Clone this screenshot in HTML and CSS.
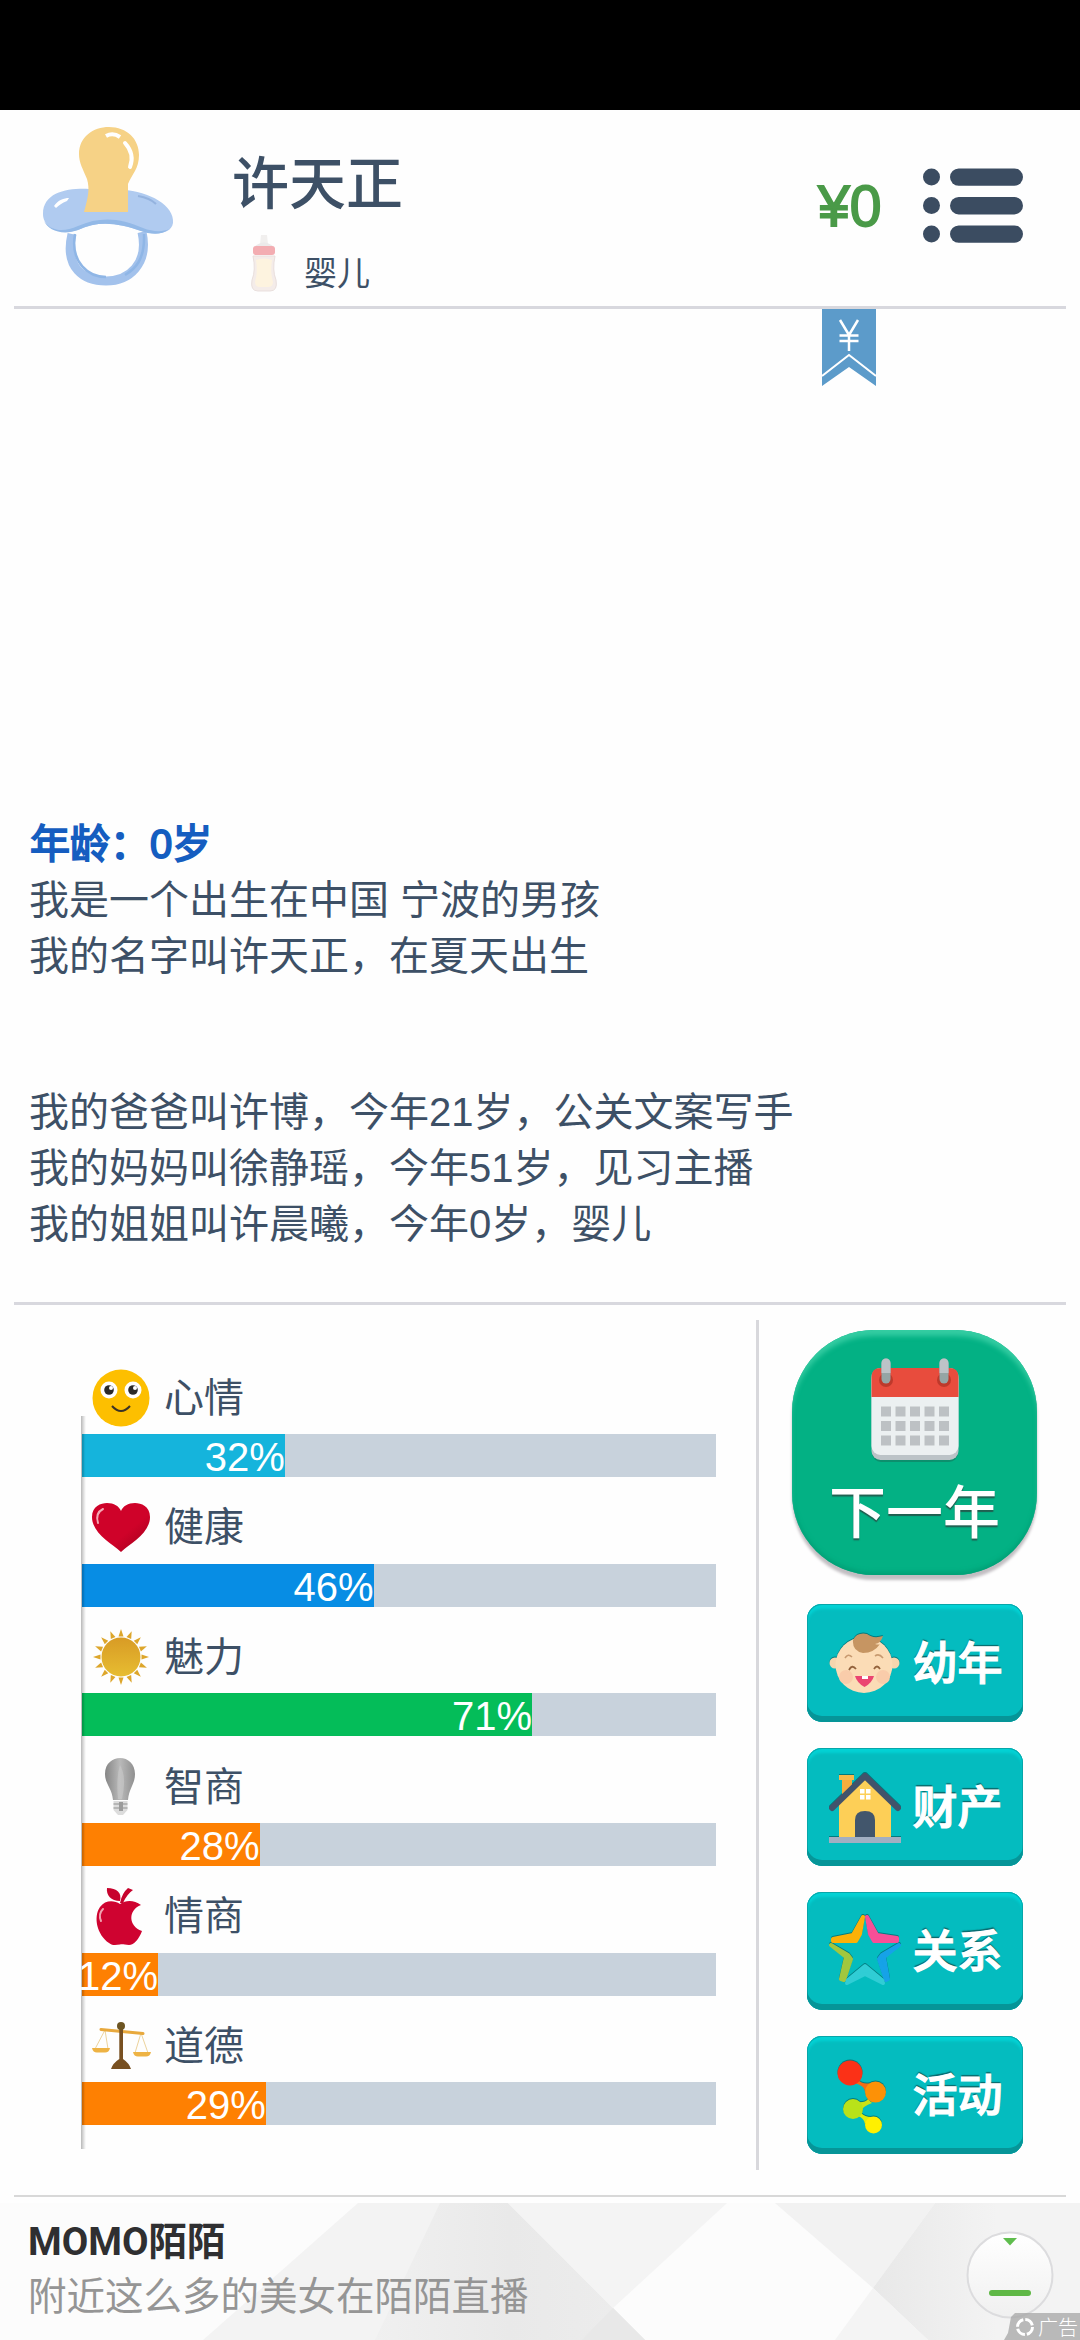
FILE: index.html
```html
<!DOCTYPE html>
<html lang="zh-CN">
<head>
<meta charset="utf-8">
<title>许天正</title>
<link rel="stylesheet" href="styles.css">
</head>
<body>
<div class="status-bar"></div>

<header class="header">
  <svg class="avatar" viewBox="0 0 136 164">
    <path d="M33 110 C25 144 45 157 67 157 C90 157 110 140 103 108" fill="none" stroke="#a3c2ec" stroke-width="9"/>
    <path d="M36 110 C31 139 50 153 67 153" fill="none" stroke="#8fb6e6" stroke-width="2.5"/>
    <path d="M105 110 C106 136 96 145 86 151" fill="none" stroke="#8fb6e6" stroke-width="2.5"/>
    <path d="M4 90 C4 68 29 64 50 65 L84 66 C110 67 136 82 134 99 C132 111 115 111 102 107 C80 99 59 96 39 106 C19 112 4 103 4 90 Z" fill="#b0cbf0"/>
    <path d="M5 97 C13 108 25 108 39 102 C61 92 82 94 104 104 C114 108 124 108 130 105 C122 112 110 110 102 107 C80 99 59 96 39 106 C23 112 9 106 5 97 Z" fill="#93b9e7"/>
    <path d="M15 82 C19 76 25 74 30 74 L28 77 C23 79 20 81 17 84 Z" fill="#fff"/>
    <path d="M99 72 Q111 74 117 80" fill="none" stroke="#94b3df" stroke-width="2"/>
    <path d="M45 88 C49 74 51 65 48 55 C44 45 40 39 40 30 C40 13 54 3 70 3 C88 3 100 15 100 31 C100 45 93 50 89 60 L89 88 Z" fill="#f6d286"/>
    <path d="M67 12 Q74 8 81 13" fill="none" stroke="#fff" stroke-width="4"/>
    <path d="M86 19 Q96 30 91 43" fill="none" stroke="#fff" stroke-width="4" stroke-linecap="round"/>
  </svg>
  <div class="identity">
    <h1 class="name">许天正</h1>
    <div class="stage">
      <svg class="bottle" viewBox="0 0 30 60">
        <path d="M11 11 L12 2 H18 L19 11 Z" fill="#f1efee"/>
        <path d="M5 14 Q15 5 25 14 Z" fill="#eceaea"/>
        <rect x="4" y="13" width="22" height="9" rx="3" fill="#f3adb2"/>
        <path d="M4 23 H26 Q23 37 27 47 Q29 58 21 58 H9 Q1 58 3 47 Q7 37 4 23 Z" fill="#f4ece9" stroke="#e9dfdd"/>
        <path d="M7 27 Q15 24 23 27 Q21 39 24 49 Q24 54 19 54 H11 Q6 54 6 49 Q9 39 7 27 Z" fill="#fdf3df"/>
      </svg>
      <span>婴儿</span>
    </div>
  </div>
  <div class="money">¥0</div>
  <svg class="menu" viewBox="0 0 100 76" fill="#3b4c61">
    <circle cx="8.5" cy="9" r="8.5"/><rect x="27" y="0.4" width="73" height="17.4" rx="8.7"/>
    <circle cx="8.5" cy="37.6" r="8.5"/><rect x="27" y="29" width="73" height="17.4" rx="8.7"/>
    <circle cx="8.5" cy="66" r="8.5"/><rect x="27" y="57.4" width="73" height="17.4" rx="8.7"/>
  </svg>
</header>

<section class="story">
  <svg class="ribbon" viewBox="0 0 54 77">
    <path d="M0 0 H54 V77 L27 58 L0 77 Z" fill="#5c9bca"/>
    <path d="M0 67 L27 46 L54 67" fill="none" stroke="#fff" stroke-width="2"/>
    <path d="M18 11 L27 26 L36 11 M27 25 V42 M17.500 26.500 H36.500 M17.500 32 H36.500" fill="none" stroke="#fff" stroke-width="2.500"/>
  </svg>
  <h2 class="age">年龄：0岁</h2>
  <p>我是一个出生在中国 宁波的男孩</p>
  <p>我的名字叫许天正，在夏天出生</p>
  <p class="family">我的爸爸叫许博，今年21岁，公关文案写手</p>
  <p>我的妈妈叫徐静瑶，今年51岁，见习主播</p>
  <p>我的姐姐叫许晨曦，今年0岁，婴儿</p>
</section>

<main class="panel">
  <section class="stats">
    <div class="stat">
      <div class="label">
        <svg viewBox="0 0 60 60">
          <circle cx="30" cy="30" r="28.500" fill="#fdbf00"/>
          <circle cx="18" cy="22" r="8.500" fill="#fff"/><circle cx="42" cy="22" r="8.500" fill="#fff"/>
          <circle cx="18" cy="22" r="4.800" fill="#2b2a29"/><circle cx="42" cy="22" r="4.800" fill="#2b2a29"/>
          <circle cx="20" cy="20" r="2" fill="#fff"/><circle cx="44" cy="20" r="2" fill="#fff"/>
          <path d="M21 38 Q30 48 39 38" fill="none" stroke="#3b3326" stroke-width="2"/>
        </svg>
        <span>心情</span>
      </div>
      <div class="bar"><div class="fill cyan" style="width:32%">32%</div></div>
    </div>
    <div class="stat">
      <div class="label">
        <svg viewBox="0 0 60 60">
          <defs><linearGradient id="heart" x2="1" y2="1"><stop offset=".6" stop-color="#cf0229"/><stop offset="1" stop-color="#9d001c"/></linearGradient></defs>
          <path d="M30 54 C20 45 1 35 1 19 C1 8 10 5 16 5 C23 5 28 8 30 13 C32 8 37 5 44 5 C50 5 59 8 59 19 C59 35 40 45 30 54 Z" fill="url(#heart)"/>
          <path d="M7 25 Q4 15 12 11" fill="none" stroke="#f4a9b5" stroke-width="2" stroke-linecap="round"/>
        </svg>
        <span>健康</span>
      </div>
      <div class="bar"><div class="fill blue" style="width:46%">46%</div></div>
    </div>
    <div class="stat">
      <div class="label">
        <svg viewBox="0 0 60 60">
          <defs><linearGradient id="sun" x2="0" y2="1"><stop stop-color="#d89b25"/><stop offset="1" stop-color="#e7bd31"/></linearGradient>
          <path id="ray" d="M30 2 L32.500 9.500 H27.500 Z" fill="#dda62b"/></defs>
          <circle cx="30" cy="30" r="19.500" fill="url(#sun)"/>
          <use href="#ray"/><use href="#ray" transform="rotate(22.5 30 30)"/><use href="#ray" transform="rotate(45 30 30)"/><use href="#ray" transform="rotate(67.5 30 30)"/>
          <use href="#ray" transform="rotate(90 30 30)"/><use href="#ray" transform="rotate(112.5 30 30)"/><use href="#ray" transform="rotate(135 30 30)"/><use href="#ray" transform="rotate(157.5 30 30)"/>
          <use href="#ray" transform="rotate(180 30 30)"/><use href="#ray" transform="rotate(202.5 30 30)"/><use href="#ray" transform="rotate(225 30 30)"/><use href="#ray" transform="rotate(247.5 30 30)"/>
          <use href="#ray" transform="rotate(270 30 30)"/><use href="#ray" transform="rotate(292.5 30 30)"/><use href="#ray" transform="rotate(315 30 30)"/><use href="#ray" transform="rotate(337.5 30 30)"/>
        </svg>
        <span>魅力</span>
      </div>
      <div class="bar"><div class="fill green" style="width:71%">71%</div></div>
    </div>
    <div class="stat">
      <div class="label">
        <svg viewBox="0 0 60 60">
          <defs><linearGradient id="bulb"><stop stop-color="#858585"/><stop offset=".5" stop-color="#b9b9b9"/><stop offset="1" stop-color="#8f8f8f"/></linearGradient></defs>
          <path d="M14 17 C14 6 22 1 29 1 C37 1 44 7 44 17 C44 27 38 31 37 43 H22 C21 31 14 27 14 17 Z" fill="url(#bulb)"/>
          <path d="M29 8 Q36 20 31 42 H27 Q25 20 29 8" fill="#c9c9c9" opacity=".6"/>
          <path d="M22.500 44 H36.500 V53 L32 58 H27 L22.500 53 Z" fill="#dcdcdc"/>
          <path d="M22.500 47 H36.500 M22.500 51 H36.500" stroke="#a9a9a9" stroke-width="1.500"/>
          <path d="M28 45 H32 V54 H28 Z" fill="#9b9b9b"/>
        </svg>
        <span>智商</span>
      </div>
      <div class="bar"><div class="fill orange" style="width:28%">28%</div></div>
    </div>
    <div class="stat">
      <div class="label">
        <svg viewBox="0 0 60 60">
          <path d="M29 17 C35 13 43 13 50 18 C37 23 37 39 51 44 C48 52 43 58 38 58 C34 58 32 57 29 57.500 C25 58 22 59 18 56 C6 48 2 30 9 20 C14 13 23 13 29 17 Z" fill="#cf0330"/>
          <path d="M29 14 C20 14 15 8 16 1 C26 1 31 6 29 14 Z" fill="#c7032d"/>
          <path d="M29 16 Q31 6 37 1 L42 3 Q36 7 32 16 Z" fill="#c7032d"/>
          <path d="M10 34 Q7 27 12 22" fill="none" stroke="#f0a2b0" stroke-width="2" stroke-linecap="round"/>
        </svg>
        <span>情商</span>
      </div>
      <div class="bar"><div class="fill orange" style="width:12%">12%</div></div>
    </div>
    <div class="stat">
      <div class="label">
        <svg viewBox="0 0 60 60">
          <path d="M14 14 L4 33 M14 14 L17 33 M50 17 L44 37 M50 17 L57 37" stroke="#ecd39c" stroke-width="1"/>
          <path d="M10 13.500 L52 17.500" stroke="#e8a93d" stroke-width="3" stroke-linecap="round"/>
          <path d="M1 32 H19 Q18 36.500 14 36.500 H6 Q2 36.500 1 32 Z M42 36 H60 Q59 40.500 55 40.500 H47 Q43 40.500 42 36 Z" fill="#eeb344"/>
          <path d="M28.300 12 H32 V43 Q38 47 40 53 H20 Q22 47 28.300 43 Z" fill="#785021"/>
          <circle cx="30" cy="10" r="4" fill="#6d5522"/>
        </svg>
        <span>道德</span>
      </div>
      <div class="bar"><div class="fill orange" style="width:29%">29%</div></div>
    </div>
  </section>

  <nav class="actions">
    <button class="next">
      <svg viewBox="0 0 88 104">
        <rect x="1" y="16" width="86" height="88" rx="9" fill="#16735b" opacity=".55"/>
        <rect x="0.500" y="13" width="87" height="89" rx="9" fill="#bcc3c7"/>
        <rect x="0.500" y="10" width="87" height="87" rx="9" fill="#ecf0f1"/>
        <path d="M0.500 39 V19 Q0.500 10 9.500 10 H78.500 Q87.500 10 87.500 19 V39 Z" fill="#e84c3d"/>
        <circle cx="15" cy="22" r="7" fill="#be392b"/><circle cx="73" cy="22" r="7" fill="#be392b"/>
        <rect x="10.500" y="0.500" width="9" height="25" rx="4.500" fill="#95a5a5"/><rect x="68.500" y="0.500" width="9" height="25" rx="4.500" fill="#95a5a5"/>
        <path d="M10.500 15 V5 A4.500 4.500 0 0 1 19.500 5 V15 Z M68.500 15 V5 A4.500 4.500 0 0 1 77.500 5 V15 Z" fill="#bdc3c7"/>
        <path d="M10 53.500 H78 M10 68 H78 M10 82.500 H78" stroke="#bdc1c4" stroke-width="10" stroke-dasharray="10 4.500"/>
      </svg>
      <span>下一年</span>
    </button>
    <button class="action">
      <svg viewBox="0 0 72 74">
        <circle cx="6" cy="37" r="5.500" fill="#f6d6ae"/><circle cx="65" cy="37" r="5.500" fill="#f6d6ae"/>
        <ellipse cx="35" cy="39" rx="28.500" ry="28" fill="#fbdcb6"/>
        <circle cx="17" cy="51" r="7" fill="#f9ccaa"/><circle cx="54" cy="51" r="7" fill="#f9ccaa"/>
        <path d="M24 14 Q28 6 38 8 Q44 13 54 10 Q52 17 46 18 Q50 19 51 18 Q45 27 34 27 Q23 25 24 14 Z" fill="#c69562"/>
        <path d="M16 32 Q19 27 23 31 M46 30 Q50 27 54 32" fill="none" stroke="#c89a70" stroke-width="1.600"/>
        <path d="M20 44 Q23 38 27 43 M45 43 Q48 38 51 43" fill="none" stroke="#93633d" stroke-width="1.800"/>
        <path d="M26 50 H45 Q43 57 35.500 61 Q28 57 26 50 Z" fill="#eb4471"/><path d="M33 50 h6 v3 h-6z" fill="#fff"/>
      </svg>
      <span>幼年</span>
    </button>
    <button class="action">
      <svg viewBox="0 0 72 74">
        <path d="M13 10 H23 V26 L13 34 Z" fill="#f5ad3d"/><rect x="10" y="5" width="15" height="5" fill="#f8b94a"/>
        <path d="M10 68 V34 L36 8 L62 34 V68 Z" fill="#fdcf57"/>
        <path d="M3 38 L36 6 L69 38" fill="none" stroke="#42536b" stroke-width="6" stroke-linecap="round" stroke-linejoin="round"/>
        <path d="M26 68 V50 Q26 41 36 41 Q46 41 46 50 V68 Z" fill="#42566c"/>
        <path d="M31 19 h4.500 v4.500 h-4.500z M37 19 h4.500 v4.500 h-4.500z M31 25 h4.500 v4.500 h-4.500z M37 25 h4.500 v4.500 h-4.500z" fill="#fff"/>
        <rect x="0" y="67" width="72" height="6" fill="#a2afc2"/>
      </svg>
      <span>财产</span>
    </button>
    <button class="action">
      <svg class="star" viewBox="0 0 72 74" stroke-linejoin="round" stroke-width="4">
        <path d="M34 6 L24 24 L4 28 L4 30 L27 30 L31 23 Z" fill="#fcb108" stroke="#fcb108"/>
        <path d="M38 6 L48 24 L68 27 L68 30 L45 30 L41 23 Z" fill="#f74f97" stroke="#f74f97"/>
        <path d="M2 34 L17 46 L12 68 L15 69 L22 48 L19 44 Z" fill="#a1c73e" stroke="#a1c73e"/>
        <path d="M70 34 L55 46 L59 68 L57 69 L50 48 L53 44 Z" fill="#16a2e8" stroke="#16a2e8"/>
        <path d="M36 55 L53 69 L54 72 L36 63 L18 72 L19 69 Z" fill="#30cdd5" stroke="#30cdd5"/>
      </svg>
      <span>关系</span>
    </button>
    <button class="action">
      <svg class="dots" viewBox="0 0 72 74">
        <path d="M28 21 Q34 27 41 25 L36 34 Q36 28 26 25 Z" fill="#f36b17"/>
        <path d="M39 41 Q36 45 28 44 L31 54 Q34 48 43 45 Z" fill="#cbe216"/>
        <path d="M29 58 Q35 60 36 66 L42 59 Q36 59 32 55 Z" fill="#dced0d"/>
        <circle cx="21" cy="15" r="12.500" fill="#fb3117"/><circle cx="46.500" cy="34" r="10.500" fill="#fd9106"/>
        <circle cx="24" cy="51" r="10" fill="#b9e219"/><circle cx="44.500" cy="67" r="8.500" fill="#fff000"/>
      </svg>
      <span>活动</span>
    </button>
  </nav>
</main>

<footer class="ad">
  <svg class="facets" viewBox="0 0 1080 137" preserveAspectRatio="none">
    <defs>
      <linearGradient id="f1"><stop stop-color="#f0f0f0"/><stop offset=".5" stop-color="#e9e9e9"/><stop offset="1" stop-color="#ededed"/></linearGradient>
      <linearGradient id="f2"><stop stop-color="#e8e8e8"/><stop offset=".6" stop-color="#f3f3f3"/></linearGradient>
    </defs>
    <rect width="1080" height="137" fill="#fcfcfc"/>
    <path d="M358 0 H508 L645 137 H203 Z" fill="#f3f3f3"/>
    <path d="M440 0 H508 L645 137 H375 Z" fill="url(#f1)"/>
    <path d="M508 0 H727 L613 105 Z" fill="#f4f4f4"/>
    <path d="M613 105 L645 137 H582 Z" fill="#e8e8e8"/>
    <path d="M775 0 H935 L873 85 Z" fill="#f2f2f2"/>
    <path d="M935 0 H1080 V137 H928 L873 85 Z" fill="url(#f2)"/>
    <path d="M873 85 L835 137 H928 Z" fill="#f4f4f4"/>
  </svg>
  <div class="ad-copy">
    <strong>MOMO陌陌</strong>
    <span>附近这么多的美女在陌陌直播</span>
  </div>
  <svg class="download" viewBox="0 0 88 88">
    <defs><linearGradient id="dl" x2="0" y2="1"><stop stop-color="#fff"/><stop offset="1" stop-color="#f0f0f0"/></linearGradient></defs>
    <circle cx="44" cy="44" r="42.500" fill="url(#dl)" stroke="#dcdcde" stroke-width="2"/>
    <path d="M37 7 H51 L44 14.500 Z" fill="#5fbd4d"/><rect x="23" y="59" width="42" height="6" rx="3" fill="#5fb846"/>
  </svg>
  <div class="ad-badge">
    <svg viewBox="0 0 20 20"><circle cx="10" cy="10" r="7.500" fill="none" stroke="#fff" stroke-width="3" stroke-dasharray="9.800 2"/></svg>
    <span>广告</span>
  </div>
</footer>
</body>
</html>
```
FILE: styles.css
```css
* { box-sizing: border-box; }

body {
  margin: 0;
  width: 1080px;
  height: 2340px;
  display: flex;
  flex-direction: column;
  background: #fefefe;
  color: #3d5066;
  font-family: "Liberation Sans", "Noto Sans CJK SC", sans-serif;
  overflow: hidden;
}

h1, h2, p { margin: 0; }

.status-bar { height: 110px; background: #000; }

.header {
  height: 199px;
  margin: 0 14px;
  border-bottom: 3px solid #d8d8de;
  display: flex;
}

.avatar { width: 136px; height: 164px; margin: 14px 0 0 25px; }

.identity { margin-left: 57px; padding-top: 29px; width: 400px; }

.name {
  font: 500 57px/80px "Noto Sans CJK SC", sans-serif;
}

.stage {
  display: flex;
  align-items: center;
  gap: 25px;
  height: 60px;
  margin: 14px 0 0 17px;
  font-size: 33px;
}
.stage span { padding-top: 15px; }
.bottle { width: 30px; height: 60px; }

.money {
  margin-left: 186px;
  width: 102px;
  padding-top: 56px;
  font: 400 57px/80px "Liberation Sans", sans-serif;
  -webkit-text-stroke: 1.800px #4a9a48;
  color: #4a9a48;
}

.menu { width: 100px; height: 76px; margin-top: 58px; margin-left: 3px; }

.story {
  height: 996px;
  margin: 0 14px;
  padding: 0 16px;
  border-bottom: 3px solid #d8d8de;
  font-size: 40px;
  line-height: 56px;
}
.ribbon {
  display: block;
  width: 54px;
  height: 77px;
  margin: 0 0 430px 792px;
}
.age {
  font: 400 40px/56px "Liberation Sans", "Noto Sans CJK SC", sans-serif;
  -webkit-text-stroke: 1.800px #155dc0;
  color: #155dc0;
}
.story p { height: 56px; margin-left: -1px; white-space: nowrap; }
.story .family { margin-top: 100px; }

.panel {
  display: flex;
  height: 865px;
  padding: 15px 0 0 82px;
}

.stats {
  position: relative;
  width: 677px;
  height: 850px;
  padding: 46px 40px 0 0;
  border-right: 3px solid #d8d8dc;
}
/* axis line drawn over the left end of every bar */
.stats::before {
  content: "";
  position: absolute;
  z-index: 1;
  left: -1px;
  top: 96px;
  width: 5px;
  height: 733px;
  background: linear-gradient(90deg, rgba(0,0,0,.28), rgba(0,0,0,.1) 60%, rgba(0,0,0,0));
}

.stat { height: 129.700px; }
.label {
  display: flex;
  align-items: center;
  gap: 13px;
  height: 68px;
  padding-left: 9px;
  font-size: 40px;
  line-height: 60px;
}
.label svg { width: 60px; height: 60px; margin-top: -4px; }
.label span { margin-top: -5px; }
.bar { height: 43px; background: #c8d2dc; }
.fill {
  position: relative;
  z-index: 2;
  height: 43px;
  display: flex;
  justify-content: flex-end;
  color: #fff;
  font-size: 40px;
  line-height: 47px;
  box-shadow: inset 3px 0 2px -1px rgba(0,0,0,.2);
}
.cyan { background: #15b4dc; }
.blue { background: #078de4; }
.green { background: #04bd59; }
.orange { background: #fe8002; }

.actions {
  width: 311px;
  padding: 10px 0 0;
  display: flex;
  flex-direction: column;
  align-items: center;
}
button {
  flex: none;
  border: 0;
  padding: 0;
  color: #fff;
  font-family: "Noto Sans CJK SC", sans-serif;
  font-weight: 500;
}
.next {
  width: 245px;
  height: 245px;
  margin-bottom: 29px;
  border-radius: 82px;
  background: #03b184;
  box-shadow: inset 0 7px 5px -1px #34cca2, inset 0 -3px 4px #02a076, 0 5px 3px #c2bec2;
  display: flex;
  flex-direction: column;
  align-items: center;
  padding-top: 28px;
  font-size: 57px;
  line-height: 80px;
  text-shadow: 0 2px 1px #215f50;
}
.next svg { width: 88px; height: 104px; }
.next span { margin-top: 6px; }

.action {
  width: 216px;
  height: 118px;
  margin-bottom: 26px;
  border-radius: 15px;
  background: #04bcbf;
  box-shadow: inset 0 -6px 0 #069598, inset 0 0 0 1px #07a6a9, inset 0 5px 3px #03d2d5;
  display: flex;
  align-items: center;
  gap: 12px;
  padding: 0 0 0 22px;
  font-size: 45px;
  line-height: 60px;
  text-shadow: 0 -2px 1px #0a6769;
  -webkit-text-stroke: 1.200px #fff;
  white-space: nowrap;
}
.action svg { width: 72px; height: 74px; margin-top: -1px; overflow: visible; filter: drop-shadow(0 -1px 0.500px rgba(0,70,75,.55)); }
.action span { margin-top: -4px; }
.action .star { margin-top: -7px; }

.ad {
  position: relative;
  margin-top: 33px;
  height: 137px;
  display: flex;
  justify-content: space-between;
  align-items: flex-start;
  padding: 0 26px 0 28px;
}
.ad::before {
  content: "";
  position: absolute;
  left: 14px;
  right: 14px;
  top: -8px;
  height: 2px;
  background: #d8d8d8;
}
.facets { position: absolute; left: 0; top: 0; width: 1080px; height: 137px; }
.ad-copy {
  position: relative;
  display: flex;
  flex-direction: column;
  padding-top: 11px;
  font-family: Roboto, "Noto Sans CJK SC", sans-serif;
  font-size: 38.500px;
  line-height: 55px;
}
.ad-copy strong { color: #2f2f31; font-size: 38.500px; }
.ad-copy span { color: #959595; }
.download { position: relative; width: 88px; height: 88px; margin-top: 28px; }
.ad-badge {
  position: absolute;
  right: 0;
  bottom: 0;
  width: 76px;
  height: 27px;
  padding-left: 11px;
  display: flex;
  align-items: center;
  gap: 3px;
  color: #fff;
  font: 300 20px/27px "Noto Sans CJK SC", sans-serif;
  background: rgba(165,165,165,.75);
  clip-path: polygon(11px 0, 100% 0, 100% 100%, 0 100%, 4px 20px, 7px 4px);
}
.ad-badge svg { width: 20px; height: 20px; flex: none; }
```
